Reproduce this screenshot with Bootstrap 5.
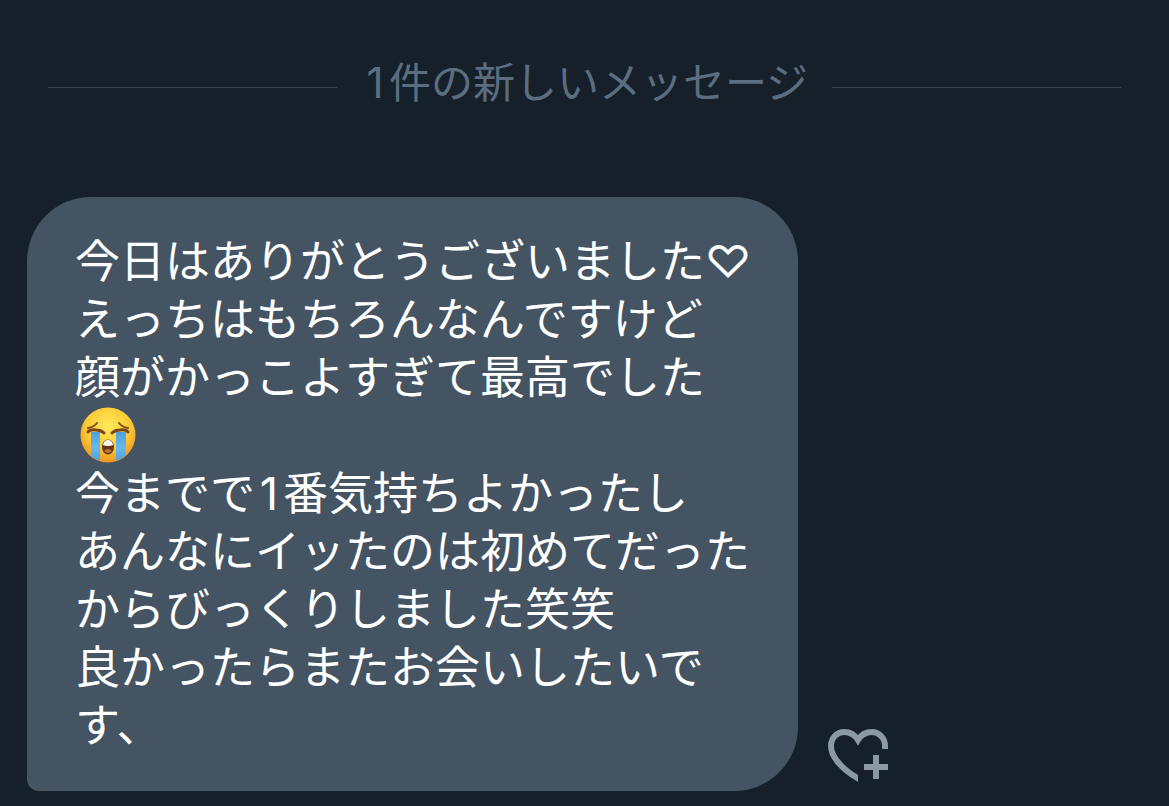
<!DOCTYPE html>
<html lang="ja">
<head>
<meta charset="utf-8">
<meta name="viewport" content="width=device-width, initial-scale=1">
<title>メッセージ</title>
<link href="https://cdn.jsdelivr.net/npm/bootstrap@5.3.0/dist/css/bootstrap.min.css" rel="stylesheet">
<style>
  body { background: #16202a; color: #fff; font-family: Inter, "Noto Sans CJK JP", sans-serif; }
  .chat { padding: 52px 27px 15px; }
  .divider { gap: 24px; margin: 0 21px 83px; color: #5b6e80; }
  .divider h1 { font-size: 42px; line-height: 62px; font-weight: 400; }
  .rule { height: 1px; background: #37444f; margin-top: 8px; }
  .bubble { background: #445463; border-radius: 64px 64px 64px 12px; padding: 36px 47px 36px 48px; font-size: 45px; line-height: 58px; }
  .digit { display: inline-block; min-width: 28px; text-align: center; }
  .emoji { width: 56px; height: 56px; margin-left: 5px; vertical-align: top; }
  .react { margin: 0 0 6px 27px; color: #8b98a5; }
</style>
</head>
<body>
<main class="chat">
  <div class="divider d-flex align-items-center">
    <span class="rule flex-fill"></span>
    <h1 class="mb-0 text-nowrap"><span class="digit">1</span>件の新しいメッセージ</h1>
    <span class="rule flex-fill"></span>
  </div>
  <div class="d-flex align-items-end">
    <p class="bubble mb-0">今日はありがとうございました♡<br>えっちはもちろんなんですけど<br>顔がかっこよすぎて最高でした<br><svg class="emoji" viewBox="0 0 56 56" role="img" aria-label="大泣きの顔">
      <defs>
        <radialGradient id="face" cx=".5" cy=".35" r=".65"><stop offset="0" stop-color="#ffe95c"/><stop offset=".6" stop-color="#fdcb35"/><stop offset="1" stop-color="#ee9420"/></radialGradient>
        <linearGradient id="tear" x1="0" y1="0" x2="0" y2="1"><stop offset="0" stop-color="#4f9fdc"/><stop offset=".5" stop-color="#68b9ed"/><stop offset="1" stop-color="#469ee2"/></linearGradient>
        <clipPath id="disc"><circle cx="28" cy="28" r="27"/></clipPath>
      </defs>
      <circle cx="28" cy="28" r="27.500" fill="url(#face)"/>
      <g clip-path="url(#disc)" fill="url(#tear)"><path d="M11 25h9v31h-9zM36 25h10v31H36z"/></g>
      <path d="M8 21q6-1 9-5M48 21q-6-1-9-5" fill="none" stroke="#81501b" stroke-width="2" stroke-linecap="round"/>
      <path d="M8 25q2-3 8-2 5 0 8 3M48 25q-2-3-8-2-5 0-8 3" fill="none" stroke="#7b461a" stroke-width="3" stroke-linecap="round"/>
      <ellipse cx="28" cy="40" rx="6" ry="7.500" fill="#673512"/>
      <path d="M23 38q1-5 5-5t5 5q-5 2-10 0z" fill="#fff"/>
      <path d="M24 44q4-4 8 0-4 4-8 0z" fill="#b87546"/>
    </svg><br>今までで<span class="digit">1</span>番気持ちよかったし<br>あんなにイッたのは初めてだった<br>からびっくりしました笑笑<br>良かったらまたお会いしたいで<br>す、</p>
    <button type="button" class="react btn p-0 border-0 d-flex" aria-label="リアクションを追加">
      <svg width="66" height="60" viewBox="825 725 66 60" fill="none" stroke="currentColor" stroke-width="6">
        <clipPath id="heart-cut"><path d="M825 725h66v26h-33v34h-33z"/></clipPath>
        <path clip-path="url(#heart-cut)" d="M864 782L858 778.500C842 769 831 757 831 746C831 738 837 732 844 732C850 732 855 735 858 740C861 735 866 732 872 732C879 732 885 738 885 746V749"/>
        <path d="M876 755v24M864 767h24"/>
      </svg>
    </button>
  </div>
</main>
<script src="https://cdn.jsdelivr.net/npm/bootstrap@5.3.0/dist/js/bootstrap.bundle.min.js"></script>
</body>
</html>
